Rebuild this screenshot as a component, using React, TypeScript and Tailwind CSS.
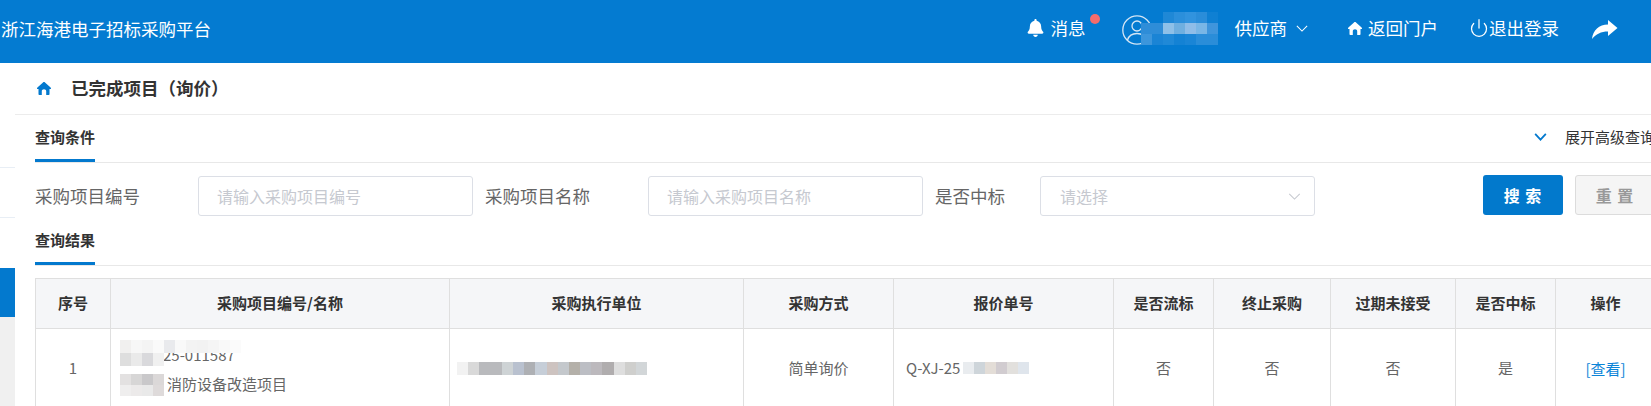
import React from 'react';
import { FaBell } from 'react-icons/fa';
import { Power } from 'lucide-react';

// blurred-out areas of the screenshot, one class list per row
const Mosaic = ({ rows, cell, height, className }: { rows: string[][]; cell: string; height: string; className: string }) => (
  <div className={`absolute flex flex-col ${className}`}>
    {rows.map((row, i) => (
      <div key={i} className="flex">
        {row.map((bg, j) => (
          <div key={j} className={`${cell} ${height} ${bg}`} />
        ))}
      </div>
    ))}
  </div>
);

const HomeIcon = ({ className }: { className: string }) => (
  <svg viewBox="0 0 14 13" className={className} fill="currentColor">
    <path d="M7 0 C7.4 0 7.7 .2 8 .4 L13.6 5.6 C14 6 14 6.5 14 7 L12.5 7 L12.5 12.2 C12.5 12.7 12.2 13 11.7 13 L9.2 13 L9.2 9.2 C9.2 8 8.2 7.3 7 7.3 C5.8 7.3 4.8 8 4.8 9.2 L4.8 13 L2.3 13 C1.8 13 1.5 12.7 1.5 12.2 L1.5 7 L0 7 C0 6.5 0 6 .4 5.6 L6 .4 C6.3 .2 6.6 0 7 0 Z" />
  </svg>
);

const Chevron = ({ className }: { className: string }) => (
  <svg viewBox="0 0 14 8" className={className} fill="none" stroke="currentColor" strokeWidth="1.2">
    <path d="M1 1 L7 7 L13 1" />
  </svg>
);

const Tab = ({ label, h }: { label: string; h: string }) => (
  <div className={`flex w-[60px] shrink-0 items-center whitespace-nowrap border-b-[3px] border-[#0379ce] text-[15px] font-bold text-[#333] ${h}`}>
    {label}
  </div>
);

const headers = [
  { label: '序号', w: 'w-[75px]' },
  { label: '采购项目编号/名称', w: 'w-[339px]' },
  { label: '采购执行单位', w: 'w-[294px]' },
  { label: '采购方式', w: 'w-[150px]' },
  { label: '报价单号', w: 'w-[220px]' },
  { label: '是否流标', w: 'w-[100px]' },
  { label: '终止采购', w: 'w-[117px]' },
  { label: '过期未接受', w: 'w-[125px]' },
  { label: '是否中标', w: 'w-[100px]' },
  { label: '操作', w: 'w-[100px]' },
];

const cellCls = 'border border-[#dfdfdf] text-center text-[15px] font-normal text-[#666]';

export default function App() {
  return (
    <div className="flex h-[406px] w-[1651px] flex-col overflow-hidden bg-white [font-family:'Noto_Sans_CJK_SC',sans-serif]">
      {/* top bar */}
      <header className="flex h-[63px] shrink-0 items-center bg-[#047bd1] text-[17.5px] text-white">
        <div className="pb-[5px] pl-[1px]">浙江海港电子招标采购平台</div>
        <div className="relative ml-auto flex items-center pb-[7px] pr-[33px]">
          <FaBell className="h-[18px] w-[17px]" />
          <span className="ml-[7px]">消息</span>
          <span className="absolute left-[63px] top-[3px] h-[10px] w-[10px] rounded-full bg-[#f56c6c]" />
          <svg viewBox="0 0 30 30" className="ml-[36px] mt-[4px] h-[30px] w-[30px]" fill="none" stroke="#d5e6f5" strokeWidth="1.3">
            <circle cx="15" cy="15" r="14.2" />
            <circle cx="15" cy="11" r="5" />
            <path d="M5.5 25 C7 20 11 18.5 15 18.5 C19 18.5 23 20 24.5 25" />
          </svg>
          <Mosaic
            className="left-[114px] top-[1px]"
            cell="w-[11px]"
            height="h-[11px]"
            rows={[
              ['bg-transparent', 'bg-transparent', 'bg-[#1f88d6]', 'bg-[#2b8fdb]', 'bg-[#3193de]', 'bg-[#2a8dd9]', 'bg-[#0f80d3]'],
              ['bg-[#2e8dd8]', 'bg-[#2e8dd8]', 'bg-[#8ec0e8]', 'bg-[#6fafe0]', 'bg-[#8fbde8]', 'bg-[#79b6e6]', 'bg-[#3f95dc]'],
              ['bg-[#3c96dc]', 'bg-[#1a84d5]', 'bg-[#2089d7]', 'bg-[#1482d4]', 'bg-[#1a85d6]', 'bg-[#2a8dd9]', 'bg-[#2a8dd9]'],
            ]}
          />
          <span className="ml-[83px]">供应商</span>
          <Chevron className="ml-[9px] h-[7px] w-[12px]" />
          <HomeIcon className="ml-[40px] h-[13px] w-[14px]" />
          <span className="ml-[6px]">返回门户</span>
          <Power className="ml-[31px] h-[20px] w-[20px]" strokeWidth={1.5} />
          <span>退出登录</span>
          <svg viewBox="0 0 26 19" className="ml-[33px] mt-[2px] h-[19px] w-[26px]" fill="currentColor">
            <path d="M16 0 L25.5 8 L16 16 L16 11.5 C9 11.5 4 14 0 19 C1 10 7 4.5 16 4.5 Z" />
          </svg>
        </div>
      </header>

      <div className="flex min-h-0 flex-1">
        {/* collapsed side menu */}
        <aside className="flex w-[15px] shrink-0 flex-col">
          <div className="h-[105px] border-b border-[#e8eef5]" />
          <div className="h-[50px] border-b border-[#e8eef5]" />
          <div className="h-[50px]" />
          <div className="h-[49px] bg-[#0379ce]" />
          <div className="flex-1 bg-[#f0f0f0]" />
        </aside>

        <main className="min-w-0 flex-1">
          <div className="flex h-[52px] items-center border-b border-[#ececec] pl-[22px]">
            <HomeIcon className="h-[13px] w-[14px] text-[#0379ce]" />
            <h1 className="ml-[20px] text-[17.5px] font-bold text-[#333]">已完成项目（询价）</h1>
          </div>

          <div className="pl-[20px]">
            <div className="flex h-[48px] border-b border-[#e8e8e8]">
              <Tab label="查询条件" h="h-[47px]" />
              <div className="ml-[1439px] flex shrink-0 items-center pb-[3px] text-[#0379ce]">
                <svg viewBox="0 0 14 9" className="h-[8px] w-[13px]" fill="none" stroke="currentColor" strokeWidth="2">
                  <path d="M1 1 L7 7.5 L13 1" />
                </svg>
                <span className="ml-[18px] whitespace-nowrap text-[15px] text-[#333]">展开高级查询</span>
              </div>
            </div>

            <div className="flex h-[57px] items-start pt-[13px] text-[17.5px] text-[#666]">
              <label className="w-[163px] shrink-0 leading-[40px]">采购项目编号</label>
              <input
                placeholder="请输入采购项目编号"
                className="h-[40px] w-[275px] shrink-0 rounded-[3px] border border-[#dcdfe6] pl-[18px] text-[16px] placeholder:text-[#c6c9d0]"
              />
              <label className="ml-[12px] w-[163px] shrink-0 leading-[40px]">采购项目名称</label>
              <input
                placeholder="请输入采购项目名称"
                className="h-[40px] w-[275px] shrink-0 rounded-[3px] border border-[#dcdfe6] pl-[18px] text-[16px] placeholder:text-[#c6c9d0]"
              />
              <label className="ml-[12px] w-[105px] shrink-0 leading-[40px]">是否中标</label>
              <div className="flex h-[40px] w-[275px] shrink-0 items-center justify-between rounded-[3px] border border-[#dcdfe6] pl-[19px] pr-[13px] text-[16px] text-[#c6c9d0]">
                请选择
                <Chevron className="h-[7px] w-[13px]" />
              </div>
              <button className="-mt-px ml-[168px] h-[40px] w-[80px] shrink-0 rounded-[3px] bg-[#0279cc] text-[16px] font-bold tracking-[1px] text-white">
                搜 索
              </button>
              <button className="-mt-px ml-[12px] h-[40px] w-[80px] shrink-0 rounded-[3px] border border-[#dcdcdc] bg-[#f5f5f5] text-[16px] font-bold tracking-[1px] text-[#999]">
                重 置
              </button>
            </div>

            <div className="flex h-[46px] border-b border-[#e8e8e8]">
              <Tab label="查询结果" h="h-[45px] pb-[2px]" />
            </div>

            <table className="mt-[12px] w-[1620px] table-fixed border-collapse">
              <thead>
                <tr className="h-[50px] bg-[#f5f6f8]">
                  {headers.map((h) => (
                    <th key={h.label} className={`${h.w} border border-[#dfdfdf] text-center text-[15px] font-bold text-[#333]`}>
                      {h.label}
                    </th>
                  ))}
                </tr>
              </thead>
              <tbody>
                <tr className="h-[80px]">
                  <td className={cellCls}>1</td>
                  <td className={`${cellCls} relative text-left`}>
                    <div className="pl-[52px] leading-[29px]">25-011587</div>
                    <div className="pl-[56px] leading-[29px]">消防设备改造项目</div>
                    <Mosaic
                      className="left-[9px] top-[11px]"
                      cell="w-[11px]"
                      height="h-[13px]"
                      rows={[
                        ['bg-[#f1f0ef]', 'bg-[#f7f7f7]', 'bg-[#f4f4f4]', 'bg-[#fafafa]', 'bg-[#e9eaed]', 'bg-[#f9f9f9]', 'bg-[#f3f3f3]', 'bg-[#f2f2f2]', 'bg-[#f5f5f5]', 'bg-[#f9f9f9]', 'bg-[#fbfbfb]'],
                        ['bg-[#dedede]', 'bg-[#eaeaea]', 'bg-[#d9d9dc]', 'bg-[#f0f0f0]', 'bg-transparent'],
                      ]}
                    />
                    <Mosaic
                      className="left-[9px] top-[45px]"
                      cell="w-[11px]"
                      height="h-[11px]"
                      rows={[
                        ['bg-[#e3e1e1]', 'bg-[#d7d6d6]', 'bg-[#c9c8ca]', 'bg-[#dbd8d8]'],
                        ['bg-[#efeeee]', 'bg-[#eceaea]', 'bg-[#e9e9e9]', 'bg-[#dedada]'],
                      ]}
                    />
                  </td>
                  <td className={`${cellCls} relative`}>
                    <Mosaic
                      className="left-[7px] top-[33px]"
                      cell="w-[11.2px]"
                      height="h-[13px]"
                      rows={[
                        ['bg-[#f2f2f2]', 'bg-[#d9d9d9]', 'bg-[#b9babd]', 'bg-[#b9babd]', 'bg-[#ced3d5]', 'bg-[#b9c1cf]', 'bg-[#aeb0b4]', 'bg-[#c6ced8]', 'bg-[#cdc3c0]', 'bg-[#c4c8cc]', 'bg-[#b4b0a9]', 'bg-[#bcbec4]', 'bg-[#bcb9bd]', 'bg-[#b0adae]', 'bg-[#dedede]', 'bg-[#cfcfcd]', 'bg-[#d2d6d8]'],
                      ]}
                    />
                  </td>
                  <td className={cellCls}>简单询价</td>
                  <td className={`${cellCls} relative pl-[12px] text-left`}>
                    Q-XJ-25
                    <Mosaic
                      className="left-[69px] top-[33px]"
                      cell="w-[11px]"
                      height="h-[12px]"
                      rows={[['bg-[#e9ecef]', 'bg-[#ced5da]', 'bg-[#e3ddd7]', 'bg-[#d1ccd0]', 'bg-[#e2e0dd]', 'bg-[#dfe5ec]']]}
                    />
                  </td>
                  <td className={cellCls}>否</td>
                  <td className={cellCls}>否</td>
                  <td className={cellCls}>否</td>
                  <td className={cellCls}>是</td>
                  <td className={cellCls}>
                    <a className="relative top-[1px] text-[#0a84d8]">[查看]</a>
                  </td>
                </tr>
              </tbody>
            </table>
          </div>
        </main>
      </div>
    </div>
  );
}
